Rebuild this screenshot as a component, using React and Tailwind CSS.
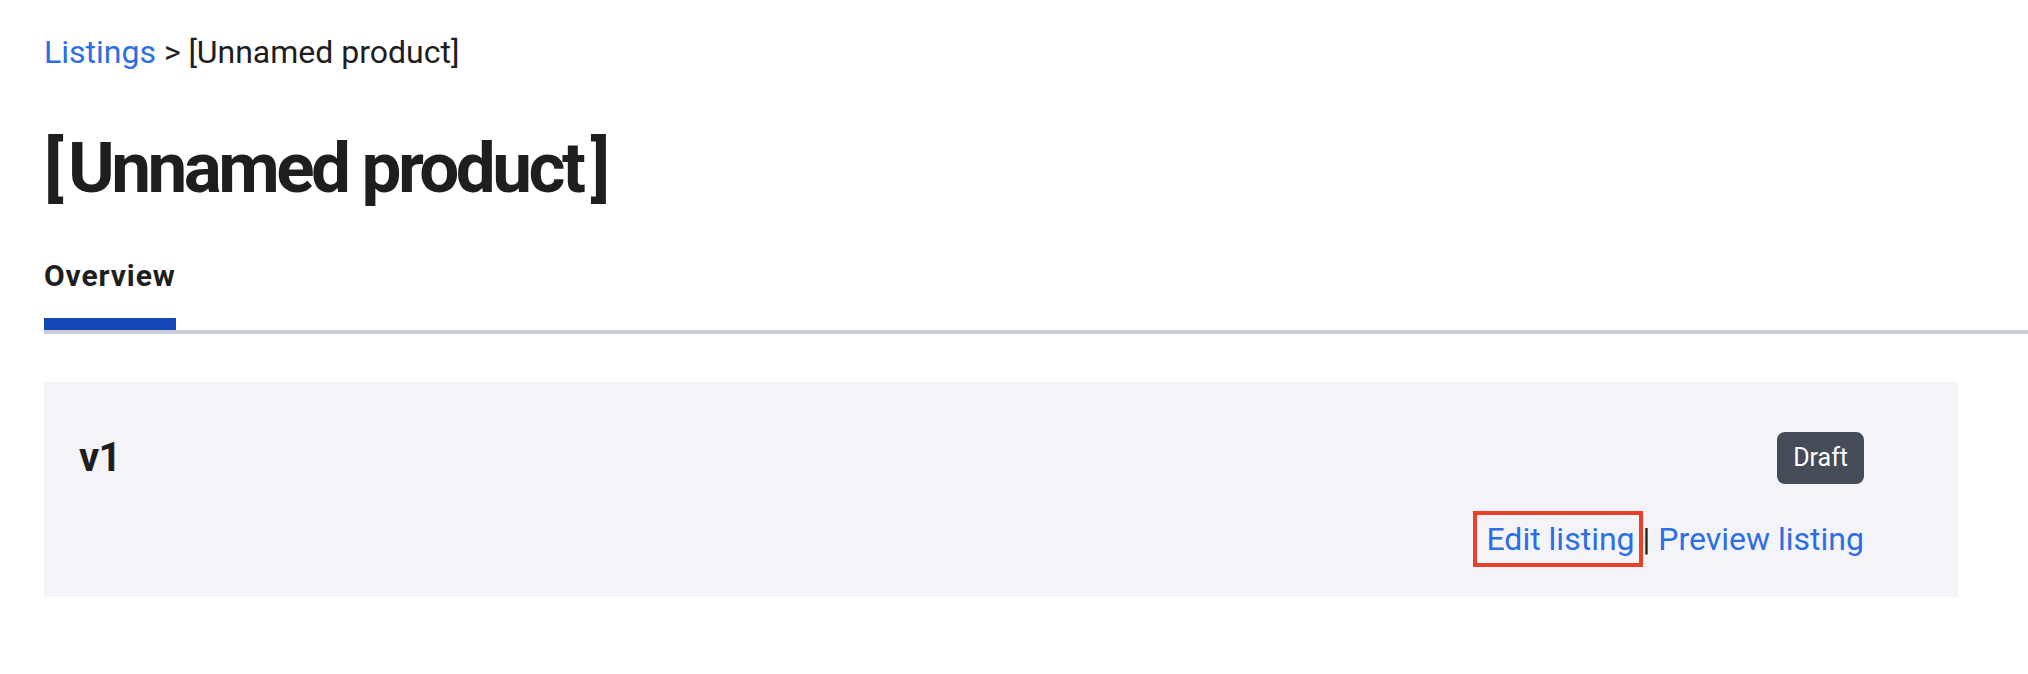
import React from 'react';

const font = { fontFamily: 'Roboto, "Noto Sans", sans-serif' };

const App = () => {
  return (
    <div className="min-h-[674px] w-full bg-white pl-[44px] pt-[28px] text-[#1e1e1e]" style={font}>
      {/* Breadcrumbs */}
      <div className="text-[32px] leading-[48px]">
        <a href="#" className="text-[#2b6ee6]">Listings</a> &gt; [Unnamed product]
      </div>

      <h1 className="mt-[49px] text-[71px] font-bold leading-[86px] tracking-[-0.05em]">
        <span className="mr-[8px]">[</span>Unnamed product<span className="ml-[8px]">]</span>
      </h1>

      {/* Tabs */}
      <div className="mt-[45px] flex border-b-[4px] border-[#c8cdd6]">
        <div className="border-b-[12px] border-[#1446b6] pb-[22px] text-[30px] font-bold leading-[40px] tracking-[0.03em]">
          Overview
        </div>
      </div>

      {/* Version card */}
      <div className="mr-[70px] mt-[48px] flex justify-between bg-[#f4f4f8] pb-[30px] pl-[35px] pr-[94px] pt-[50px]">
        <div className="text-[40px] font-bold leading-[52px] tracking-[-0.02em]">v1</div>
        <div className="flex flex-col items-end">
          <span className="flex h-[52px] items-center rounded-[8px] bg-[#464c57] px-[16px] text-[25px] font-normal text-white">
            Draft
          </span>
          <div className="mt-[27px] flex items-center text-[32px] leading-[48px]">
            <a href="#" className="border-[4px] border-[#e8402a] pl-[9px] pr-[4px] text-[#2b6ee6]">Edit listing</a>
            <span>|&nbsp;</span>
            <a href="#" className="text-[#2b6ee6]">Preview listing</a>
          </div>
        </div>
      </div>
    </div>
  );
};

export default App;
